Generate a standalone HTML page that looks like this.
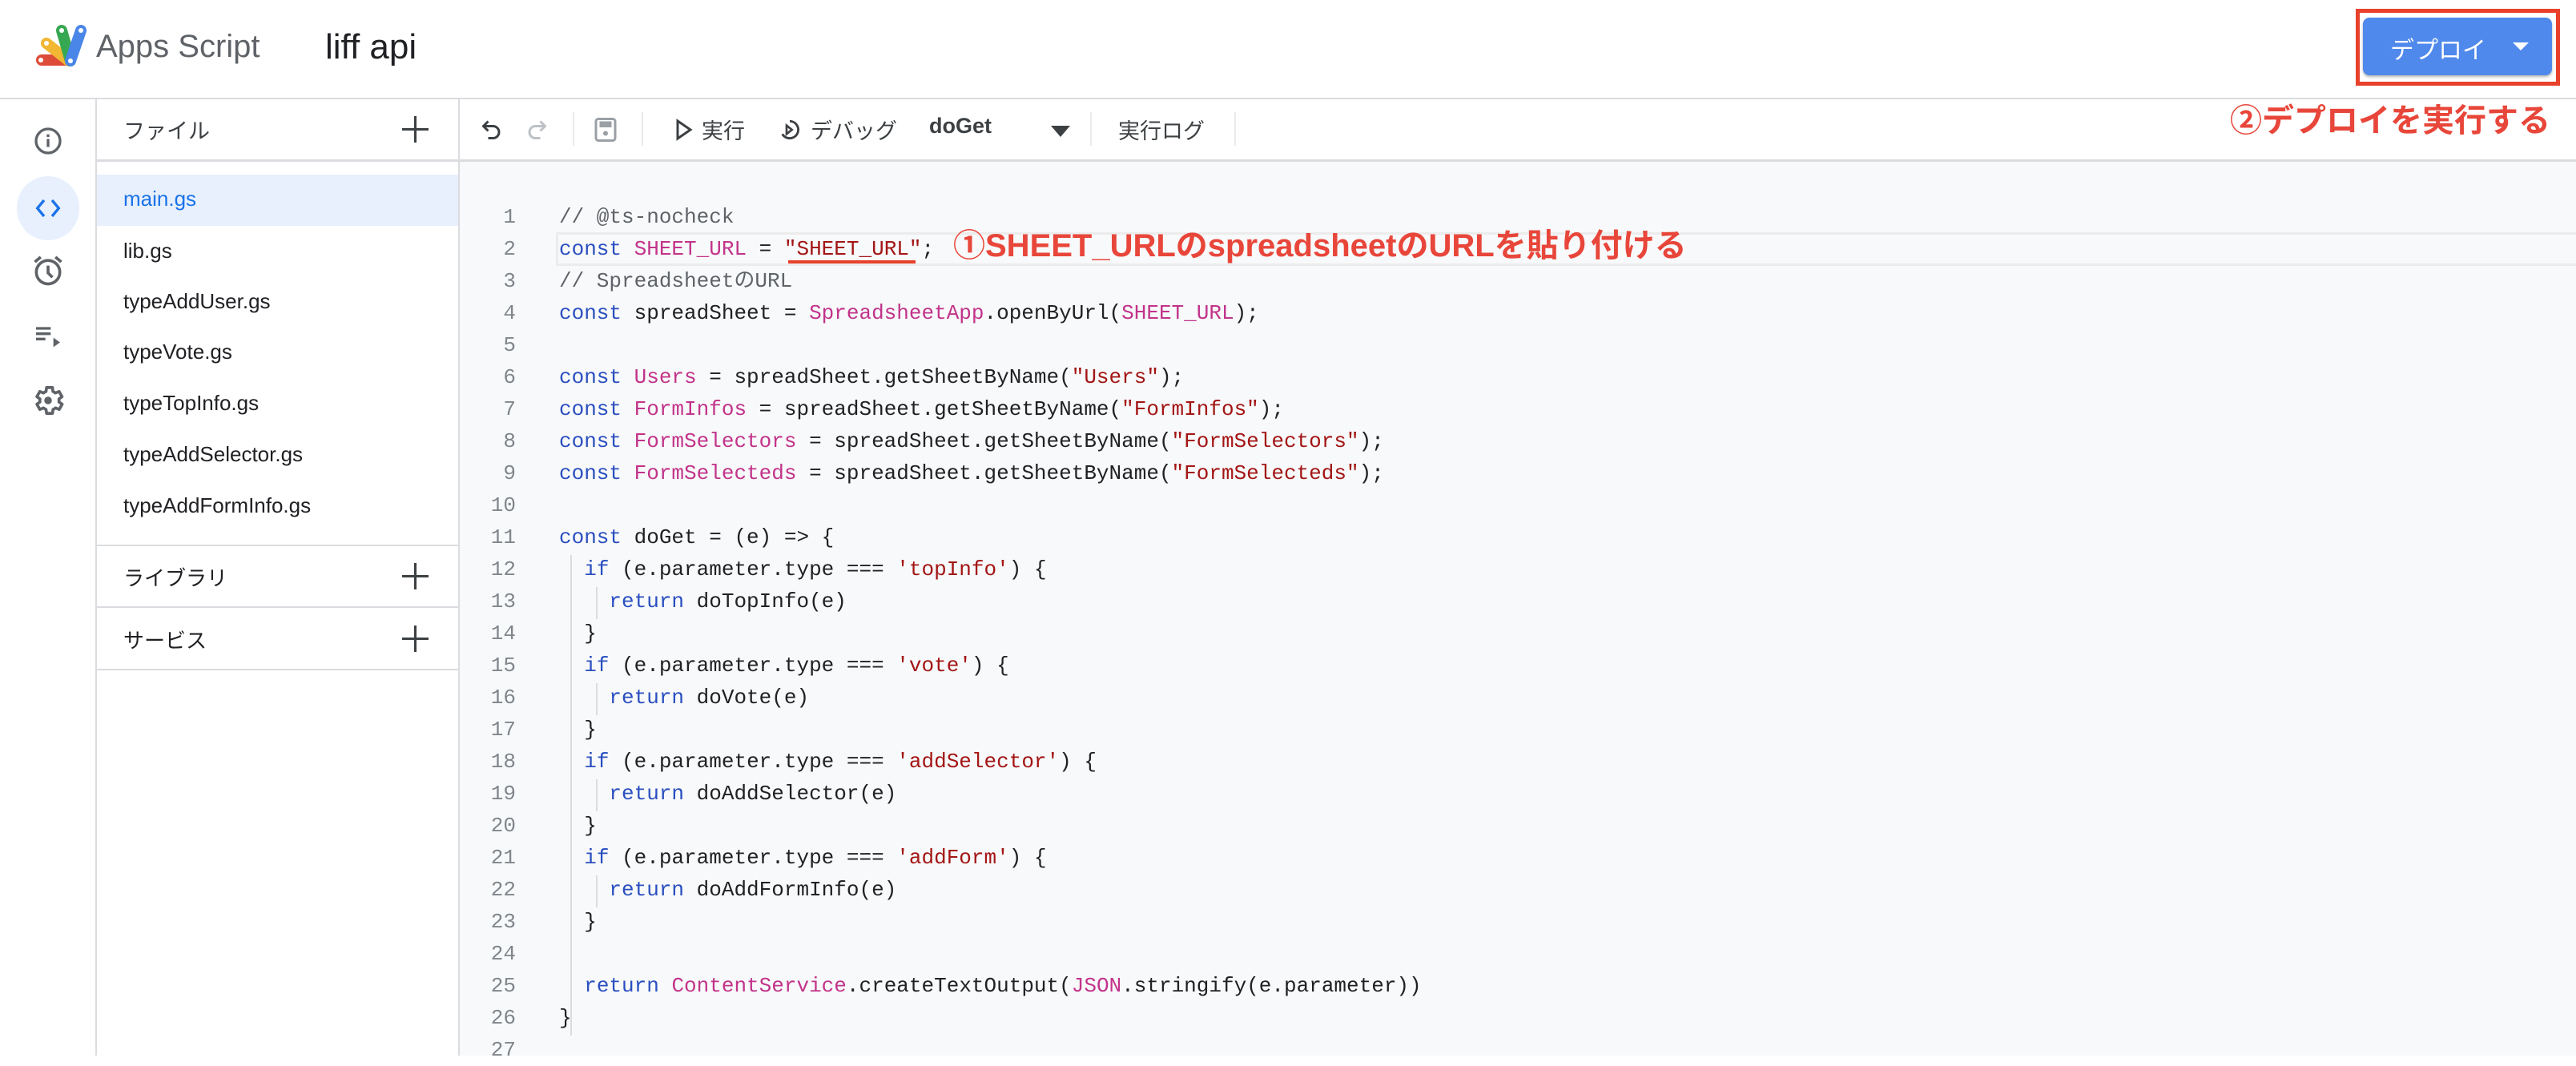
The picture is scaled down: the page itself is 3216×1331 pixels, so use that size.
<!DOCTYPE html>
<html><head><meta charset="utf-8"><style>
*{margin:0;padding:0;box-sizing:border-box}
body{width:3216px;height:1318px;overflow:hidden;background:#fff;font-family:"Liberation Sans","Noto Sans CJK JP",sans-serif;position:relative;color:#3c4043}
.abs{position:absolute}
.code{position:absolute;left:0;font-family:"Liberation Mono","Noto Sans CJK JP",monospace;font-size:26px;white-space:pre;line-height:40px;color:#202124}
.ln{position:absolute;width:60px;left:584px;text-align:right;font-family:"Liberation Mono",monospace;font-size:26px;line-height:40px;color:#80868b}
.k{color:#2a4fc0}.v{color:#c2338a}.s{color:#a31515}.c{color:#5f6368}
.file{position:absolute;left:154px;font-size:26px;color:#202124}
.tb{position:absolute;top:142px;font-size:27px;color:#3c4043}
.sep{position:absolute;top:140px;width:2px;height:42px;background:#e8eaed}
</style></head><body>
<!-- header -->
<svg class="abs" style="left:40px;top:26px" width="76" height="62" viewBox="40 26 76 62">
<line x1="52" y1="75" x2="88" y2="75" stroke="#dd4b39" stroke-width="14" stroke-linecap="round"/>
<line x1="58" y1="54" x2="86" y2="76" stroke="#f2b733" stroke-width="14" stroke-linecap="round"/>
<line x1="77" y1="38" x2="88" y2="76" stroke="#37a852" stroke-width="14" stroke-linecap="round"/>
<line x1="101" y1="38" x2="88" y2="76" stroke="#4a86e8" stroke-width="14" stroke-linecap="round"/>
<circle cx="51" cy="75" r="3" fill="#fff"/><circle cx="58" cy="54" r="3" fill="#fff"/><circle cx="77" cy="38" r="3" fill="#fff"/><circle cx="101" cy="38" r="3" fill="#fff"/><circle cx="88" cy="76" r="3" fill="#fff"/>
</svg>
<div class="abs" style="left:120px;top:36px;font-size:40px;color:#5f6368">Apps Script</div>
<div class="abs" style="left:406px;top:34px;font-size:44px;color:#202124">liff api</div>
<div class="abs" style="left:2941px;top:11px;width:255px;height:96px;border:5px solid #e8412c"></div>
<div class="abs" style="left:2950px;top:22px;width:236px;height:72px;background:#5089ec;border-radius:8px;box-shadow:0 2px 3px rgba(0,0,0,.3)"></div>
<div class="abs" style="left:2984px;top:38px;font-size:30px;color:#fff">デプロイ</div>
<div class="abs" style="left:3137px;top:53px;width:0;height:0;border-left:10px solid transparent;border-right:10px solid transparent;border-top:10px solid #fff"></div>
<div class="abs" style="left:2784px;top:118px;font-size:40px;font-weight:bold;color:#e8463a">②デプロイを実行する</div>
<div class="abs" style="left:0;top:122px;width:3216px;height:2px;background:#dadce0"></div>
<!-- rail -->
<div class="abs" style="left:119px;top:124px;width:2px;height:1194px;background:#dadce0"></div>
<svg class="abs" style="left:40px;top:156px" width="40" height="40" viewBox="0 0 24 24"><circle cx="12" cy="12" r="9" fill="none" stroke="#5f6368" stroke-width="2"/><rect x="11" y="10.5" width="2" height="6" fill="#5f6368"/><rect x="11" y="7" width="2" height="2" fill="#5f6368"/></svg>
<div class="abs" style="left:21px;top:220px;width:78px;height:80px;border-radius:39px;background:#e8f0fe"></div>
<svg class="abs" style="left:40px;top:240px" width="40" height="40" viewBox="0 0 24 24"><path d="M9 6l-5 6 5 6M15 6l5 6-5 6" fill="none" stroke="#1a73e8" stroke-width="2"/></svg>
<svg class="abs" style="left:38px;top:316px" width="44" height="44" viewBox="0 0 24 24"><circle cx="12" cy="13" r="8" fill="none" stroke="#5f6368" stroke-width="2"/><path d="M12 8.5v5l3 3" fill="none" stroke="#5f6368" stroke-width="2"/><path d="M3 6l4-3.3M21 6l-4-3.3" stroke="#5f6368" stroke-width="2"/></svg>
<svg class="abs" style="left:40px;top:400px" width="40" height="40" viewBox="0 0 24 24"><path d="M3 6h11M3 10h11M3 14h7" stroke="#5f6368" stroke-width="2"/><path d="M16 13l5 3.5-5 3.5z" fill="#5f6368"/></svg>
<svg class="abs" style="left:38px;top:478px" width="44" height="44" viewBox="0 0 24 24"><path d="M19.4 13a7.6 7.6 0 000-2l2.1-1.6-2-3.5-2.5 1a7 7 0 00-1.7-1L15 3.2h-4l-.4 2.7a7 7 0 00-1.7 1l-2.5-1-2 3.5L6.5 11a7.6 7.6 0 000 2l-2.1 1.6 2 3.5 2.5-1a7 7 0 001.7 1l.4 2.7h4l.4-2.7a7 7 0 001.7-1l2.5 1 2-3.5z" fill="none" stroke="#5f6368" stroke-width="2" stroke-linejoin="round"/><circle cx="12" cy="12" r="2.6" fill="#5f6368"/></svg>
<!-- files panel -->
<div class="abs" style="left:572px;top:124px;width:2px;height:1194px;background:#dadce0"></div>
<div class="abs" style="left:154px;top:142px;font-size:27px;color:#3c4043">ファイル</div>
<div class="abs" style="left:517px;top:145px;width:3px;height:33px;background:#3c4043"></div><div class="abs" style="left:502px;top:160px;width:33px;height:3px;background:#3c4043"></div>
<div class="abs" style="left:120px;top:199px;width:3096px;height:3px;background:#dadce0"></div>
<div class="abs" style="left:121px;top:218px;width:451px;height:64px;background:#e8f0fe"></div>
<div class="file" style="top:233px;color:#1a73e8">main.gs</div>
<div class="file" style="top:298px">lib.gs</div>
<div class="file" style="top:361px">typeAddUser.gs</div>
<div class="file" style="top:424px">typeVote.gs</div>
<div class="file" style="top:488px">typeTopInfo.gs</div>
<div class="file" style="top:552px">typeAddSelector.gs</div>
<div class="file" style="top:616px">typeAddFormInfo.gs</div>
<div class="abs" style="left:121px;top:680px;width:451px;height:2px;background:#dadce0"></div>
<div class="file" style="top:702px">ライブラリ</div>
<div class="abs" style="left:517px;top:703px;width:3px;height:33px;background:#3c4043"></div><div class="abs" style="left:502px;top:718px;width:33px;height:3px;background:#3c4043"></div>
<div class="abs" style="left:121px;top:757px;width:451px;height:2px;background:#dadce0"></div>
<div class="file" style="top:780px">サービス</div>
<div class="abs" style="left:517px;top:781px;width:3px;height:33px;background:#3c4043"></div><div class="abs" style="left:502px;top:796px;width:33px;height:3px;background:#3c4043"></div>
<div class="abs" style="left:121px;top:835px;width:451px;height:2px;background:#dadce0"></div>
<!-- toolbar -->
<svg class="abs" style="left:596px;top:144px" width="36" height="36" viewBox="0 0 24 24"><path d="M9 5L5 9l4 4M5 9h8a5 5 0 010 10H9" fill="none" stroke="#3c4043" stroke-width="2"/></svg>
<svg class="abs" style="left:652px;top:144px" width="36" height="36" viewBox="0 0 24 24"><path d="M15 5l4 4-4 4M19 9h-8a5 5 0 000 10h4" fill="none" stroke="#bdc1c6" stroke-width="2"/></svg>
<div class="sep" style="left:715px"></div>
<svg class="abs" style="left:738px;top:144px" width="36" height="36" viewBox="0 0 24 24"><rect x="4" y="3" width="16" height="18" rx="2" fill="none" stroke="#9aa0a6" stroke-width="2"/><rect x="7" y="5" width="10" height="5" fill="#9aa0a6"/><circle cx="12" cy="15" r="2" fill="#9aa0a6"/></svg>
<div class="sep" style="left:801px"></div>
<svg class="abs" style="left:842px;top:148px" width="24" height="28" viewBox="0 0 24 28"><path d="M4 3l16 11-16 11z" fill="none" stroke="#3c4043" stroke-width="3"/></svg>
<div class="tb" style="left:876px">実行</div>
<svg class="abs" style="left:970px;top:146px" width="32" height="32" viewBox="0 0 24 24"><path d="M12 4a8 8 0 11-7 12" fill="none" stroke="#3c4043" stroke-width="2.2"/><path d="M9 8l5 4-5 4z" fill="none" stroke="#3c4043" stroke-width="2"/></svg>
<div class="tb" style="left:1012px">デバッグ</div>
<div class="tb" style="left:1160px;font-weight:bold;color:#3c4043">doGet</div>
<div class="abs" style="left:1312px;top:157px;width:0;height:0;border-left:12px solid transparent;border-right:12px solid transparent;border-top:14px solid #3c4043"></div>
<div class="sep" style="left:1361px"></div>
<div class="tb" style="left:1396px">実行ログ</div>
<div class="sep" style="left:1541px"></div>
<!-- editor -->
<div class="abs" style="left:574px;top:202px;width:2642px;height:1116px;background:#f8f9fa"></div>
<div class="abs" style="left:694px;top:290px;width:2522px;height:42px;border:3px solid #ececec;border-right:none"></div>
<div class="abs" style="left:712px;top:693px;width:2px;height:600px;background:#dadce0"></div>
<div class="abs" style="left:744px;top:733px;width:2px;height:40px;background:#dadce0"></div>
<div class="abs" style="left:744px;top:853px;width:2px;height:40px;background:#dadce0"></div>
<div class="abs" style="left:744px;top:973px;width:2px;height:40px;background:#dadce0"></div>
<div class="abs" style="left:744px;top:1093px;width:2px;height:40px;background:#dadce0"></div>
<div class="abs" style="left:0;top:251px;">
<div class="ln" style="top:0">1</div><div class="ln" style="top:40px">2</div><div class="ln" style="top:80px">3</div><div class="ln" style="top:120px">4</div><div class="ln" style="top:160px">5</div><div class="ln" style="top:200px">6</div><div class="ln" style="top:240px">7</div><div class="ln" style="top:280px">8</div><div class="ln" style="top:320px">9</div><div class="ln" style="top:360px">10</div><div class="ln" style="top:400px">11</div><div class="ln" style="top:440px">12</div><div class="ln" style="top:480px">13</div><div class="ln" style="top:520px">14</div><div class="ln" style="top:560px">15</div><div class="ln" style="top:600px">16</div><div class="ln" style="top:640px">17</div><div class="ln" style="top:680px">18</div><div class="ln" style="top:720px">19</div><div class="ln" style="top:760px">20</div><div class="ln" style="top:800px">21</div><div class="ln" style="top:840px">22</div><div class="ln" style="top:880px">23</div><div class="ln" style="top:920px">24</div><div class="ln" style="top:960px">25</div><div class="ln" style="top:1000px">26</div><div class="ln" style="top:1040px">27</div>
<div class="code" style="left:698px;top:0"><span class="c">// @ts-nocheck</span>
<span class="k">const</span> <span class="v">SHEET_URL</span> = <span class="s">"SHEET_URL"</span>;
<span class="c">// SpreadsheetのURL</span>
<span class="k">const</span> spreadSheet = <span class="v">SpreadsheetApp</span>.openByUrl(<span class="v">SHEET_URL</span>);

<span class="k">const</span> <span class="v">Users</span> = spreadSheet.getSheetByName(<span class="s">"Users"</span>);
<span class="k">const</span> <span class="v">FormInfos</span> = spreadSheet.getSheetByName(<span class="s">"FormInfos"</span>);
<span class="k">const</span> <span class="v">FormSelectors</span> = spreadSheet.getSheetByName(<span class="s">"FormSelectors"</span>);
<span class="k">const</span> <span class="v">FormSelecteds</span> = spreadSheet.getSheetByName(<span class="s">"FormSelecteds"</span>);

<span class="k">const</span> doGet = (e) => {
  <span class="k">if</span> (e.parameter.type === <span class="s">'topInfo'</span>) {
    <span class="k">return</span> doTopInfo(e)
  }
  <span class="k">if</span> (e.parameter.type === <span class="s">'vote'</span>) {
    <span class="k">return</span> doVote(e)
  }
  <span class="k">if</span> (e.parameter.type === <span class="s">'addSelector'</span>) {
    <span class="k">return</span> doAddSelector(e)
  }
  <span class="k">if</span> (e.parameter.type === <span class="s">'addForm'</span>) {
    <span class="k">return</span> doAddFormInfo(e)
  }

  <span class="k">return</span> <span class="v">ContentService</span>.createTextOutput(<span class="v">JSON</span>.stringify(e.parameter))
}
</div></div>
<div class="abs" style="left:984px;top:325px;width:159px;height:4px;background:#e8412c"></div>
<div class="abs" style="left:1190px;top:274px;font-size:40px;font-weight:bold;color:#e8463a">①SHEET_URLのspreadsheetのURLを貼り付ける</div>
</body></html>
